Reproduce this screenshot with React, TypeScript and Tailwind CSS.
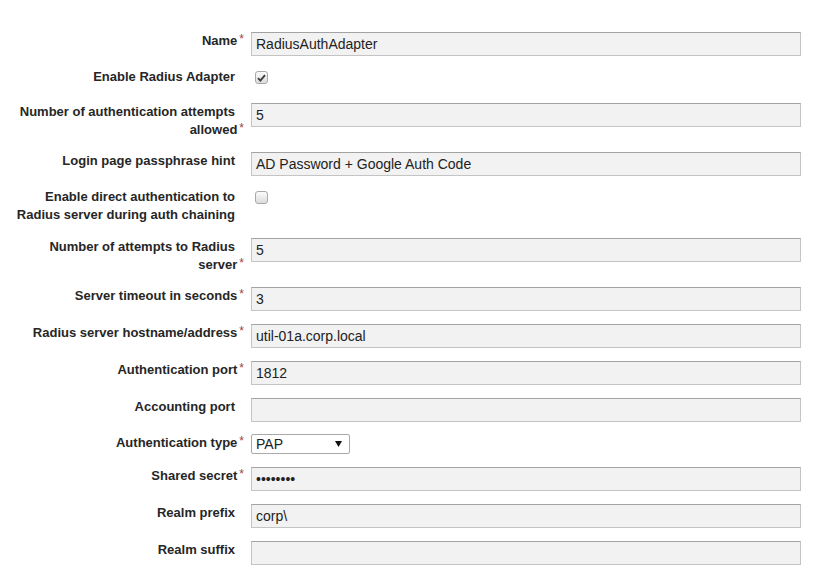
import React from "react";

type Row =
  | { kind: "input"; label: string; req?: boolean; value: string; h: number; password?: boolean }
  | { kind: "check"; label: string; checked: boolean; h: number }
  | { kind: "select"; label: string; req?: boolean; value: string; h: number };

const rows: Row[] = [
  { kind: "input", label: "Name", req: true, value: "RadiusAuthAdapter", h: 36 },
  { kind: "check", label: "Enable Radius Adapter", checked: true, h: 35 },
  { kind: "input", label: "Number of authentication attempts allowed", req: true, value: "5", h: 49 },
  { kind: "input", label: "Login page passphrase hint", value: "AD Password + Google Auth Code", h: 36 },
  { kind: "check", label: "Enable direct authentication to Radius server during auth chaining", checked: false, h: 50 },
  { kind: "input", label: "Number of attempts to Radius server", req: true, value: "5", h: 49 },
  { kind: "input", label: "Server timeout in seconds", req: true, value: "3", h: 37 },
  { kind: "input", label: "Radius server hostname/address", req: true, value: "util-01a.corp.local", h: 37 },
  { kind: "input", label: "Authentication port", req: true, value: "1812", h: 37 },
  { kind: "input", label: "Accounting port", value: "", h: 36 },
  { kind: "select", label: "Authentication type", req: true, value: "PAP", h: 33 },
  { kind: "input", label: "Shared secret", req: true, value: "••••••••", h: 37, password: true },
  { kind: "input", label: "Realm prefix", value: "corp\\", h: 37 },
  { kind: "input", label: "Realm suffix", value: "", h: 35 },
];

function Label({ text, req }: { text: string; req?: boolean }) {
  return (
    <div className="ml-[14px] w-[221px] shrink-0 text-right text-[13px] font-bold leading-[18px] text-[#262626]">
      {text}
      {req && (
        <span className="relative -top-[2px] ml-[2px] -mr-[9px] text-[12px] font-normal text-[#a0403c]">*</span>
      )}
    </div>
  );
}

function Check({ checked }: { checked: boolean }) {
  return (
    <div className="ml-[20px] mt-[3px] flex h-[13px] w-[13px] items-center justify-center rounded-[3px] border border-[#a9a9a9] bg-gradient-to-b from-[#fbfbfb] to-[#dcdcdc]">
      {checked && (
        <svg width="9" height="8" viewBox="0 0 9 8">
          <path d="M1 4.2 L3.4 6.6 L8 1.2" fill="none" stroke="#3c3c3c" strokeWidth="1.9" />
        </svg>
      )}
    </div>
  );
}

export default function App() {
  return (
    <div
      className="min-h-[576px] w-[813px] bg-white pt-[32px]"
      style={{ fontFamily: '"Liberation Sans", Arial, sans-serif' }}
    >
      {rows.map((r, i) => (
        <div key={i} className="flex items-start" style={{ height: r.h }}>
          <Label text={r.label} req={"req" in r ? r.req : false} />
          {r.kind === "input" && (
            <div className="ml-[16px] h-[24px] w-[550px] border border-[#c4c4c4] border-t-[#a3a3a3] bg-[#f2f2f2] pl-[4px] text-[14px] leading-[22px] text-[#222222]">
              {r.value}
            </div>
          )}
          {r.kind === "check" && <Check checked={r.checked} />}
          {r.kind === "select" && (
            <div className="ml-[16px] flex h-[20px] w-[99px] items-center justify-between rounded-[2px] border border-[#a9a9a9] bg-white pl-[4px] pr-[7px] text-[14px] leading-[18px] text-[#222222]">
              <span>{r.value}</span>
              <svg width="7" height="6" viewBox="0 0 7 6">
                <path d="M0 0 L7 0 L3.5 6 Z" fill="#111" />
              </svg>
            </div>
          )}
        </div>
      ))}
    </div>
  );
}
